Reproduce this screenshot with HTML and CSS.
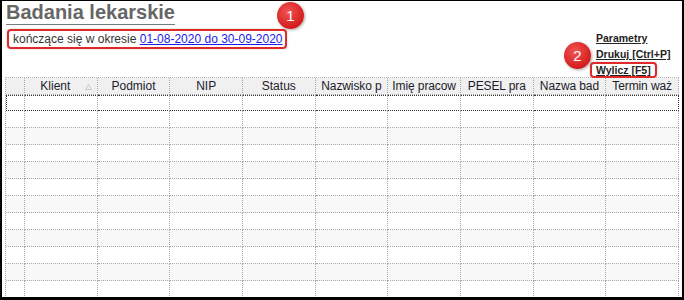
FILE: index.html
```html
<!DOCTYPE html>
<html lang="pl">
<head>
    <meta charset="UTF-8">
    <title>Badania lekarskie</title>
    <link rel="stylesheet" href="styles.css">
</head>
<body>
    <div class="frame">
        <div class="top">
            <div class="title-block">
                <h1>Badania lekarskie</h1>
                <div class="period">kończące się w okresie <a href="#">01-08-2020 do 30-09-2020</a></div>
            </div>
            <div class="actions">
                <a href="#" class="action">Parametry</a>
                <a href="#" class="action">Drukuj [Ctrl+P]</a>
                <a href="#" class="action marked">Wylicz [F5]</a>
            </div>
        </div>

        <span class="badge badge-1">1</span>
        <span class="badge badge-2">2</span>

        <table class="grid">
            <colgroup>
                <col class="col-mark">
                <col><col><col><col><col><col><col><col><col>
            </colgroup>
            <thead>
                <tr>
                    <th></th>
                    <th class="sorted">Klient
                        <svg class="sort" width="7" height="6" viewBox="0 0 7 6"><path d="M3.5 0.5 L6.5 5.5 L0.5 5.5 Z" fill="none" stroke="#c8c8c8" stroke-width="1"/></svg>
                    </th>
                    <th>Podmiot</th>
                    <th>NIP</th>
                    <th>Status</th>
                    <th class="cut">Nazwisko p</th>
                    <th class="cut">Imię pracow</th>
                    <th class="cut">PESEL pra</th>
                    <th class="cut">Nazwa bad</th>
                    <th class="cut">Termin waż</th>
                </tr>
            </thead>
            <tbody>
                <tr class="selected"><td></td><td></td><td></td><td></td><td></td><td></td><td></td><td></td><td></td><td></td></tr>
                <tr><td></td><td></td><td></td><td></td><td></td><td></td><td></td><td></td><td></td><td></td></tr>
                <tr class="alt"><td></td><td></td><td></td><td></td><td></td><td></td><td></td><td></td><td></td><td></td></tr>
                <tr><td></td><td></td><td></td><td></td><td></td><td></td><td></td><td></td><td></td><td></td></tr>
                <tr class="alt"><td></td><td></td><td></td><td></td><td></td><td></td><td></td><td></td><td></td><td></td></tr>
                <tr><td></td><td></td><td></td><td></td><td></td><td></td><td></td><td></td><td></td><td></td></tr>
                <tr class="alt"><td></td><td></td><td></td><td></td><td></td><td></td><td></td><td></td><td></td><td></td></tr>
                <tr><td></td><td></td><td></td><td></td><td></td><td></td><td></td><td></td><td></td><td></td></tr>
                <tr class="alt"><td></td><td></td><td></td><td></td><td></td><td></td><td></td><td></td><td></td><td></td></tr>
                <tr><td></td><td></td><td></td><td></td><td></td><td></td><td></td><td></td><td></td><td></td></tr>
                <tr class="alt"><td></td><td></td><td></td><td></td><td></td><td></td><td></td><td></td><td></td><td></td></tr>
                <tr><td></td><td></td><td></td><td></td><td></td><td></td><td></td><td></td><td></td><td></td></tr>
            </tbody>
        </table>
    </div>
</body>
</html>
```

FILE: styles.css
```css
* {
    margin: 0;
    padding: 0;
    box-sizing: border-box;
}

body {
    font-family: 'Liberation Sans', Arial, sans-serif;
    background: #fff;
    color: #222;
}

.frame {
    position: relative;
    width: 684px;
    height: 300px;
    overflow: hidden;
    border: 2px solid #000;
    border-top-width: 1px;
    border-bottom-width: 3px;
    background: #fff;
}

/* header area */
.top {
    display: flex;
    height: 76px;
    padding-left: 4px;
}

.title-block h1 {
    display: inline-block;
    font-size: 20px;
    line-height: 23px;
    font-weight: bold;
    color: #666;
    border-bottom: 1px solid #7a7a7a;
}

.period {
    width: 280px;
    margin-top: 4px;
    margin-left: 1px;
    padding: 0 4px;
    border: 2px solid #e02a2a;
    border-radius: 4px;
    box-shadow: 0 0 2px rgba(0, 0, 0, 0.25);
    font-size: 12px;
    line-height: 16px;
    color: #333;
    white-space: nowrap;
}

.period a {
    color: #1a1aee;
}

.actions {
    display: flex;
    flex-direction: column;
    align-items: flex-start;
    margin-left: auto;
    width: 92px;
    padding-top: 29px;
}

.action {
    padding: 0 4px;
    border: 2px solid transparent;
    border-radius: 4px;
    font-size: 10.5px;
    line-height: 12px;
    font-weight: bold;
    color: #222;
}

.action.marked {
    border-color: #e02a2a;
    box-shadow: 0 0 2px rgba(0, 0, 0, 0.25);
}

/* numbered annotation badges */
.badge {
    position: absolute;
    width: 27px;
    height: 27px;
    border-radius: 50%;
    background: radial-gradient(circle at 40% 35%, #f25555, #d41c1c 70%, #b81212);
    box-shadow: 1px 1px 3px rgba(0, 0, 0, 0.35);
    color: #fff;
    font-size: 15px;
    line-height: 27px;
    text-align: center;
}

.badge-1 {
    left: 275px;
    top: 1px;
}

.badge-2 {
    left: 562px;
    top: 41px;
}

/* data grid */
.grid {
    margin-left: 3px;
    width: 674px;
    table-layout: fixed;
    border-collapse: separate;
    border-spacing: 0;
    border-left: 1px dotted #a8a8a8;
    border-top: 1px dotted #b8b8b8;
}

.col-mark {
    width: 19px;
}

.grid th,
.grid td {
    border-right: 1px dotted #a8a8a8;
    border-bottom: 1px dotted #a8a8a8;
}

.grid th {
    position: relative;
    height: 17px;
    padding: 0 3px;
    background: #f0f0f0;
    font-size: 12px;
    font-weight: normal;
    color: #1c1c2c;
    white-space: nowrap;
    overflow: hidden;
    text-align: center;
}

.grid th.cut {
    padding: 0 2px;
    letter-spacing: -0.1px;
}

.grid th.sorted {
    padding-right: 14px;
}

.sort {
    position: absolute;
    right: 5px;
    top: 6px;
}

.grid td {
    height: 17px;
    background: #fff;
}

.grid tr.alt td {
    background: #f8f8f8;
}

.grid tr.selected td {
    height: 16px;
    border-top: 1px dotted #333;
    border-bottom: 1px dotted #333;
}

.grid tr.selected td:first-child {
    border-left: 1px dotted #333;
}

.grid tr.selected td:last-child {
    border-right: 1px dotted #333;
}
```
